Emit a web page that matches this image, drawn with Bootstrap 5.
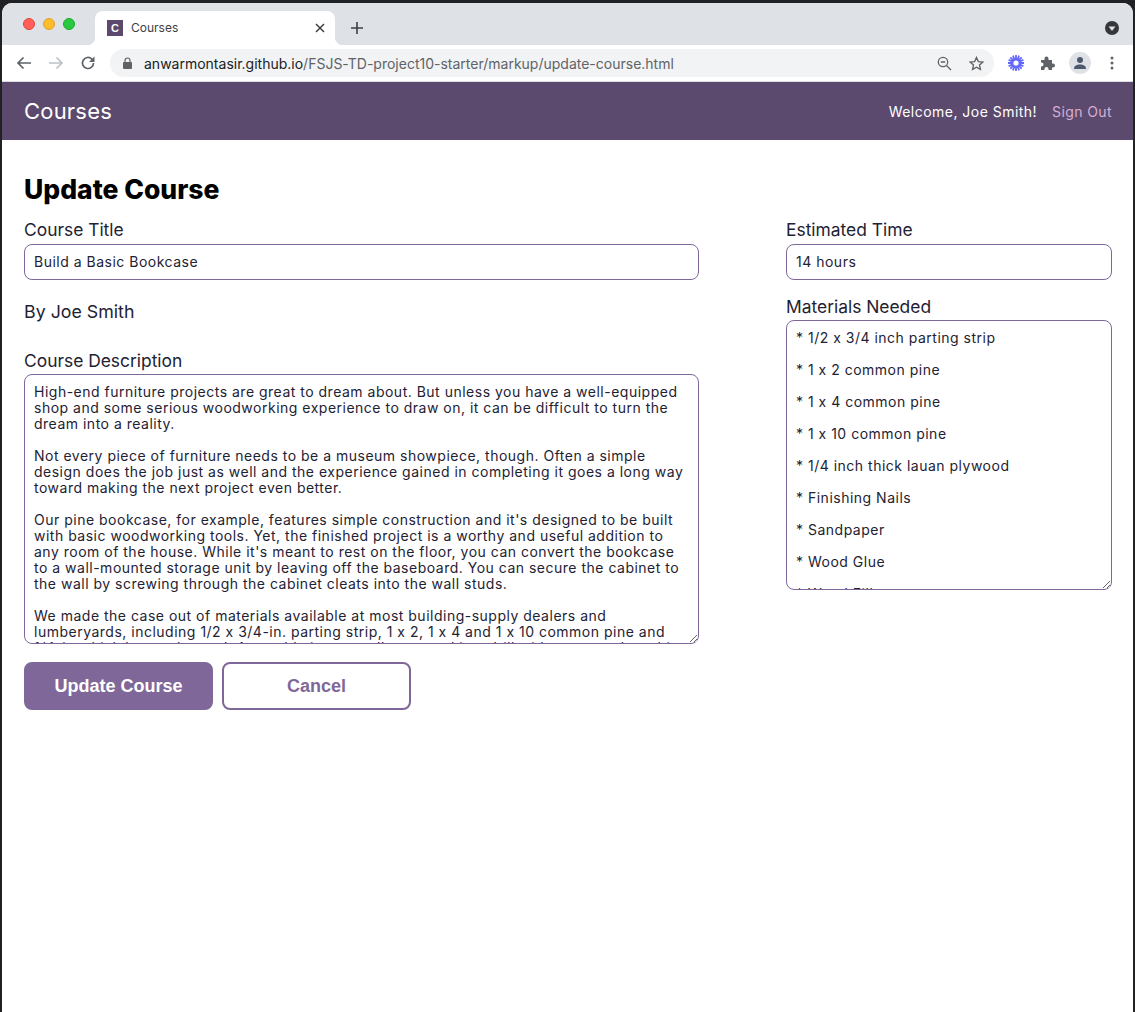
<!DOCTYPE html>
<html lang="en">
<head>
  <meta charset="UTF-8" />
  <meta name="viewport" content="width=device-width, initial-scale=1.0"/>
  <title>Courses</title>
  <link href="https://cdn.jsdelivr.net/npm/bootstrap@5.3.0/dist/css/bootstrap.min.css" rel="stylesheet">
  <style>
    html, body { height: 100%; }
    body {
      background: #202124;
      font-family: "Inter", "Liberation Sans", sans-serif;
      font-feature-settings: "calt" 0;
      color: #1e2233;
      overflow: hidden;
    }
    .window-frame {
      margin: 3px 2px 0;
      height: 1009px;
      background: #fff;
      border-radius: 10px 10px 0 0;
      overflow: hidden;
    }
    /* browser chrome */
    .tab-strip { height: 42px; background: #dee1e6; padding-top: 8px; }
    .traffic { width: 93px; padding: 7px 0 0 21px; gap: 8px; }
    .traffic span { width: 12px; height: 12px; border-radius: 50%; }
    .tl-red { background: #ff5f57; border: 1px solid #e0443e; }
    .tl-yellow { background: #ffbd2e; border: 1px solid #dea123; }
    .tl-green { background: #28c940; border: 1px solid #1aab29; }
    .browser-tab {
      position: relative;
      width: 240px; height: 34px; background: #fff;
      border-radius: 8px 8px 0 0;
      padding: 0 10px 0 12px;
      font-size: 12px; color: #3c4043;
    }
    .browser-tab::before, .browser-tab::after {
      content: ""; position: absolute; bottom: 0; width: 8px; height: 8px;
    }
    .browser-tab::before { left: -8px; background: radial-gradient(circle at 0 0, #dee1e6 8px, #fff 8.500px); }
    .browser-tab::after { right: -8px; background: radial-gradient(circle at 100% 0, #dee1e6 8px, #fff 8.500px); }
    .tab-favicon {
      width: 16px; height: 16px; background: #5b4a6e; color: #fff;
      font: bold 11px/16px "Liberation Sans", sans-serif; text-align: center;
      margin-right: 8px;
    }
    .tab-plus { margin: 11px 0 0 16px; }
    .tab-menu { margin: 10px 14px 0 auto; }
    .toolbar { height: 36px; background: #fff; border-bottom: 1px solid #dadce0; box-sizing: content-box; padding-left: 14px; }
    .url-bar {
      flex: 0 0 884px; height: 28px; margin-left: 14px; background: #f1f3f4; border-radius: 14px;
      padding: 0 10px 0 13px; font-size: 14px; color: #5f6368;
    }
    .url-host { color: #202124; }
    .url-text { margin-left: 12px; white-space: nowrap; }
    .star-icon { margin-left: 17px; }
    .ext-icon { margin-left: 14px; }
    .puzzle-icon { margin-left: 16px; }
    .avatar-ring { width: 22px; height: 22px; border-radius: 50%; background: #dee1e6; margin-left: 13px; }
    .dots-icon { margin-left: 19px; }

    /* page header */
    .site-bar { height: 58px; background: #5b4a6e; padding: 0 21px 0 22px; }
    .site-logo { font-size: 22px; color: #fff; letter-spacing: .2px; }
    .site-welcome { font-size: 14px; color: #fff; letter-spacing: .47px; }
    .site-signout { font-size: 14px; color: #d8aed3; text-decoration: none; margin-left: 15px; letter-spacing: .4px; }

    /* form */
    .page-wrap { padding: 32px 21px 0 22px; }
    .page-title { font-size: 26.500px; font-weight: 800; color: #000; line-height: 34px; margin: 0 0 13px; }
    .col-main { width: 675px; }
    .col-side { width: 326px; }
    .field-label { display: block; font-size: 17.400px; line-height: 22px; margin: 0 0 3px; color: #1e2233; }
    .field-label.area-label { margin-bottom: 2px; }
    .field-input, .field-area {
      border: 1px solid #7f6899;
      border-radius: 8px;
      font-size: 14px;
      letter-spacing: .5px;
      color: #1e2233;
      background: #fff;
    }
    .field-input { height: 36px; padding: 0 9px 1px; }
    .field-area {
      display: block; width: 100%; height: 270px; padding: 9px;
      line-height: 16px; overflow: hidden; white-space: pre; resize: both;
    }
    .materials-area { line-height: 32px; padding: 1px 9px; height: 270px; }
    .course-by { font-size: 17.800px; line-height: 22px; margin: 21px 0 27px; }
    .side-gap { margin-top: 16px; }
    .btn-update, .btn-cancel {
      width: 189px; height: 48px; border-radius: 8px;
      font: bold 18px "Liberation Sans", sans-serif;
      border: 2px solid #7f6899;
    }
    .btn-update { background: #7f6899; color: #fff; }
    .btn-cancel { background: #fff; color: #7f6899; }
    .btn-row { margin-top: 18px; gap: 9px; }
  </style>
</head>
<body>
  <div class="window-frame">
    <!-- browser chrome -->
    <div class="tab-strip d-flex">
      <div class="traffic d-flex align-items-start"><span class="tl-red"></span><span class="tl-yellow"></span><span class="tl-green"></span></div>
      <div class="browser-tab d-flex align-items-center">
        <span class="tab-favicon">C</span>
        <span class="flex-grow-1">Courses</span>
        <svg width="10" height="10" viewBox="0 0 10 10"><path d="M1 1l8 8M9 1l-8 8" stroke="#3c4043" stroke-width="1.5"/></svg>
      </div>
      <svg class="tab-plus" width="12" height="12" viewBox="0 0 12 12"><path d="M6 0v12M0 6h12" stroke="#3c4043" stroke-width="1.6"/></svg>
      <svg class="tab-menu" width="14" height="14" viewBox="0 0 14 14"><circle cx="7" cy="7" r="7" fill="#35363a"/><path d="M3.500 5.500h7L7 10z" fill="#dee1e6"/></svg>
    </div>
    <div class="toolbar d-flex align-items-center">
      <svg width="16" height="14" viewBox="0 0 16 14"><path d="M15 7H2M7.500 1.500L2 7l5.500 5.500" fill="none" stroke="#5f6368" stroke-width="1.700"/></svg>
      <svg class="ms-3" width="16" height="14" viewBox="0 0 16 14"><path d="M1 7h13M8.500 1.500L14 7l-5.500 5.500" fill="none" stroke="#bdc1c6" stroke-width="1.700"/></svg>
      <svg class="ms-3" width="16" height="16" viewBox="0 0 16 16"><path d="M13.500 8a5.500 5.500 0 1 1-1.600-3.900L13.500 5.700" fill="none" stroke="#5f6368" stroke-width="1.700"/><path d="M14.500 1.500v5.500H9z" fill="#5f6368"/></svg>
      <div class="url-bar d-flex align-items-center">
        <svg width="9" height="12" viewBox="0 0 9 12"><path d="M2 5V3.500a2.500 2.500 0 0 1 5 0V5" fill="none" stroke="#5f6368" stroke-width="1.200"/><rect y="5" width="9" height="7" rx="1" fill="#5f6368"/></svg>
        <span class="url-text"><span class="url-host">anwarmontasir.github.io</span>/FSJS-TD-project10-starter/markup/update-course.html</span>
        <svg class="ms-auto" width="15" height="15" viewBox="0 0 15 15"><circle cx="6" cy="6" r="4.700" fill="none" stroke="#5f6368" stroke-width="1.300"/><path d="M9.500 9.500L14 14M3.800 6h4.400" stroke="#5f6368" stroke-width="1.300"/></svg>
        <svg class="star-icon" width="15" height="15" viewBox="0 0 16 16"><path d="M8 1.500l2 4.400 4.800.5-3.600 3.200 1 4.700L8 11.900l-4.200 2.400 1-4.700L1.200 6.400 6 5.900z" fill="none" stroke="#5f6368" stroke-width="1.400"/></svg>
      </div>
      <svg class="ext-icon" width="16" height="16" viewBox="0 0 16 16"><path d="M8 0v16M0 8h16M2.300 2.300l11.400 11.400M13.700 2.300L2.300 13.700M4.900.6l6.200 14.800M11.100.6L4.900 15.400M.6 4.900l14.800 6.200M15.400 4.900L.6 11.100" stroke="#6468f8" stroke-width="1.800"/><circle cx="8" cy="8" r="2.600" fill="#fff"/></svg>
      <svg class="puzzle-icon" width="16" height="16" viewBox="0 0 16 16"><path d="M1 5h3.500V3.500a2 2 0 0 1 4 0V5H12v3.500h1a2 2 0 0 1 0 4h-1V15H8.500v-1a2 2 0 0 0-4 0v1H1v-3.500h.5a2 2 0 0 0 0-4H1z" fill="#5f6368"/></svg>
      <div class="avatar-ring d-flex align-items-center justify-content-center">
        <svg width="14" height="14" viewBox="0 0 14 14"><circle cx="7" cy="4" r="3" fill="#4d5a6e"/><path d="M1 13c0-3.500 3-4.500 6-4.500s6 1 6 4.500z" fill="#4d5a6e"/></svg>
      </div>
      <svg class="dots-icon" width="4" height="14" viewBox="0 0 4 14"><circle cx="2" cy="2" r="1.500" fill="#5f6368"/><circle cx="2" cy="7" r="1.500" fill="#5f6368"/><circle cx="2" cy="12" r="1.500" fill="#5f6368"/></svg>
    </div>

    <!-- page -->
    <header class="site-bar d-flex align-items-center justify-content-between">
      <span class="site-logo">Courses</span>
      <div class="d-flex align-items-center">
        <span class="site-welcome">Welcome, Joe Smith!</span>
        <a class="site-signout" href="#">Sign Out</a>
      </div>
    </header>

    <main class="page-wrap">
      <h1 class="page-title">Update Course</h1>
      <form>
        <div class="d-flex justify-content-between">
          <div class="col-main">
            <label class="field-label" for="courseTitle">Course Title</label>
            <input class="field-input w-100" id="courseTitle" type="text" value="Build a Basic Bookcase">
            <p class="course-by">By Joe Smith</p>
            <label class="field-label area-label" for="courseDescription">Course Description</label>
            <textarea class="field-area" id="courseDescription">High-end furniture projects are great to dream about. But unless you have a well-equipped
shop and some serious woodworking experience to draw on, it can be difficult to turn the
dream into a reality.

Not every piece of furniture needs to be a museum showpiece, though. Often a simple
design does the job just as well and the experience gained in completing it goes a long way
toward making the next project even better.

Our pine bookcase, for example, features simple construction and it's designed to be built
with basic woodworking tools. Yet, the finished project is a worthy and useful addition to
any room of the house. While it's meant to rest on the floor, you can convert the bookcase
to a wall-mounted storage unit by leaving off the baseboard. You can secure the cabinet to
the wall by screwing through the cabinet cleats into the wall studs.

We made the case out of materials available at most building-supply dealers and
lumberyards, including 1/2 x 3/4-in. parting strip, 1 x 2, 1 x 4 and 1 x 10 common pine and
1/4-in.-thick lauan plywood. Assembly is easy; all you need is a drill with a counterbore bit</textarea>
          </div>
          <div class="col-side">
            <label class="field-label" for="estimatedTime">Estimated Time</label>
            <input class="field-input w-100" id="estimatedTime" type="text" value="14 hours">
            <label class="field-label area-label side-gap" for="materialsNeeded">Materials Needed</label>
            <textarea class="field-area materials-area" id="materialsNeeded">* 1/2 x 3/4 inch parting strip
* 1 x 2 common pine
* 1 x 4 common pine
* 1 x 10 common pine
* 1/4 inch thick lauan plywood
* Finishing Nails
* Sandpaper
* Wood Glue
* Wood Filler</textarea>
          </div>
        </div>
        <div class="btn-row d-flex">
          <button class="btn btn-update" type="button">Update Course</button>
          <button class="btn btn-cancel" type="button">Cancel</button>
        </div>
      </form>
    </main>
  </div>
  <script src="https://cdn.jsdelivr.net/npm/bootstrap@5.3.0/dist/js/bootstrap.bundle.min.js"></script>
</body>
</html>
